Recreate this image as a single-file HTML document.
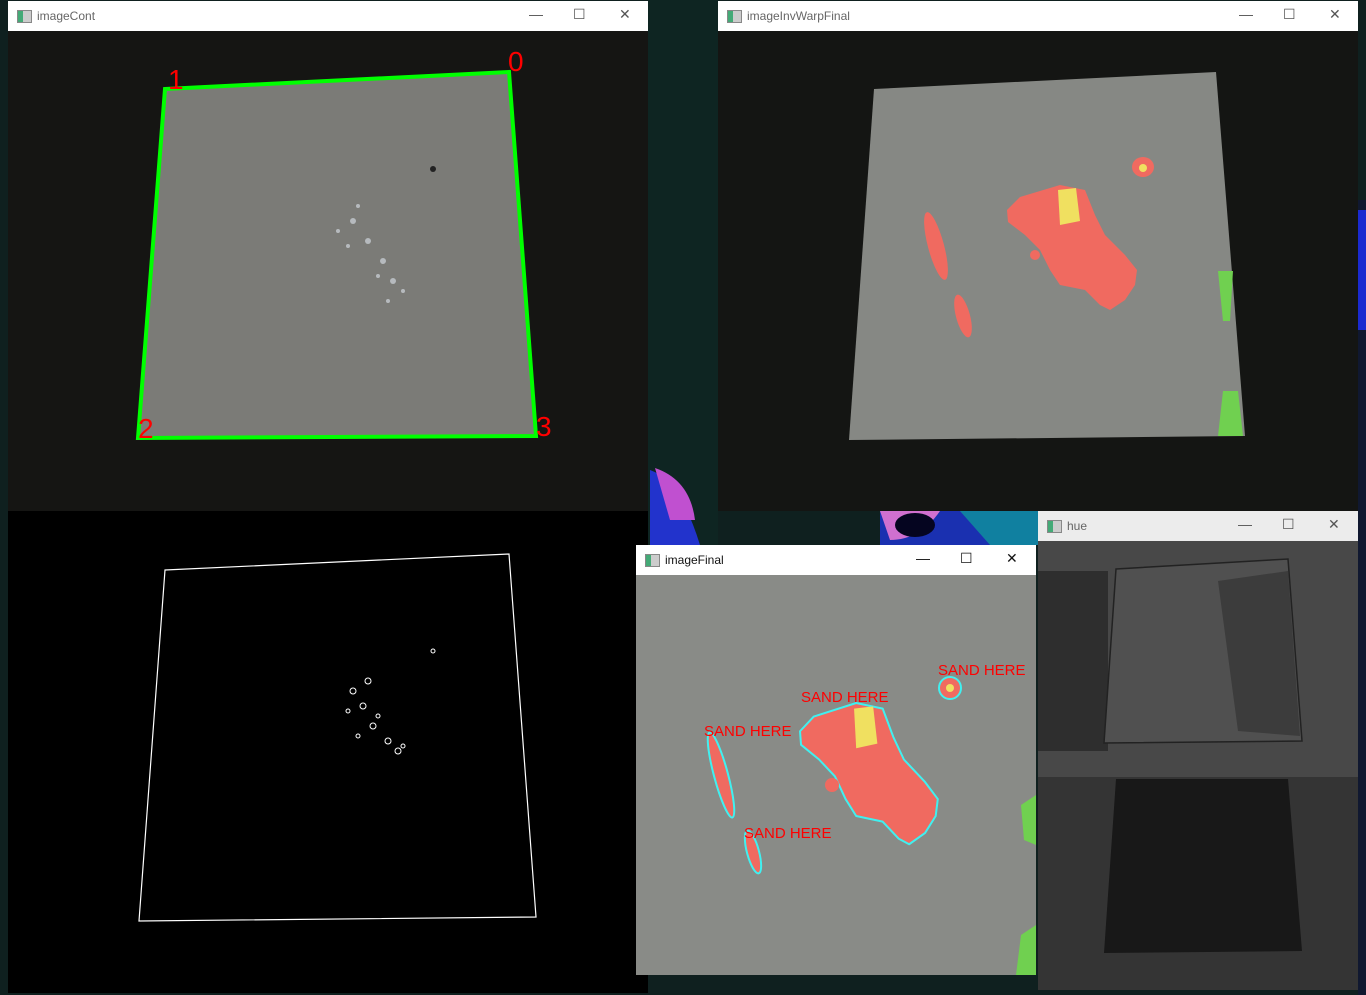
<!DOCTYPE html>
<html><head><meta charset="utf-8"><style>
body{margin:0;width:1366px;height:995px;overflow:hidden;background:#0f201f;position:relative;font-family:"Liberation Sans",sans-serif}
.w{position:absolute;background:#fff}
.t{position:absolute;left:0;right:0;top:0;background:#fff;font-size:12px;color:#666;}
.t .ic{position:absolute;left:9px;top:9px;width:13px;height:11px;border:1px solid #888;background:linear-gradient(90deg,#4a7 0 40%,#ccc 40%)}
.t .n{position:absolute;left:29px;top:8px}
.t .b{position:absolute;top:5px;font-size:14px;color:#555}
.c{position:absolute;left:0;right:0;bottom:0}
</style></head><body>
<svg style="position:absolute;left:0;top:0" width="1366" height="995">
<rect x="648" y="0" width="70" height="560" fill="#0e2522"/>
<path d="M650 470 Q680 480 700 545 L650 545Z" fill="#2233cc"/>
<path d="M655 468 Q690 480 695 520 L670 520Z" fill="#c050d0"/>
<rect x="880" y="511" width="160" height="34" fill="#1a30b0"/>
<path d="M880 511 L940 511 Q920 540 890 540Z" fill="#d070d0"/>
<ellipse cx="915" cy="525" rx="20" ry="12" fill="#050520"/>
<path d="M960 511 L1038 511 L1038 545 L990 545Z" fill="#1080a0"/>
<rect x="1358" y="200" width="8" height="795" fill="#101830"/>
<rect x="1358" y="210" width="8" height="120" fill="#1a2ad0"/>
</svg>

<!-- imageCont -->
<div class="w" style="left:8px;top:1px;width:640px;height:510px;border-radius:6px 6px 0 0">
<div class="t" style="height:30px"><span class="ic"></span><span class="n">imageCont</span><span class="b" style="left:521px">—</span><span class="b" style="left:565px">☐</span><span class="b" style="left:611px">✕</span></div>
<svg class="c" width="640" height="480" style="top:30px;background:#151513">
<polygon points="157,58 501,41 528,405 130,407" fill="#7b7b77"/>
<polygon points="157,58 501,41 528,405 130,407" fill="none" stroke="#00ff00" stroke-width="4"/>
<g fill="#cfd6dc" opacity=".7"><circle cx="345" cy="190" r="3"/><circle cx="360" cy="210" r="3"/><circle cx="375" cy="230" r="3"/><circle cx="385" cy="250" r="3"/><circle cx="350" cy="175" r="2"/><circle cx="330" cy="200" r="2"/><circle cx="370" cy="245" r="2"/><circle cx="395" cy="260" r="2"/><circle cx="340" cy="215" r="2"/><circle cx="380" cy="270" r="2"/></g>
<circle cx="425" cy="138" r="3" fill="#222"/>
<g fill="#ff0000" font-size="28" font-family="Liberation Sans"><text x="500" y="40">0</text><text x="160" y="58">1</text><text x="130" y="407">2</text><text x="528" y="405">3</text></g>
</svg></div>

<!-- imageInvWarpFinal -->
<div class="w" style="left:718px;top:1px;width:640px;height:510px;border-radius:6px 6px 0 0">
<div class="t" style="height:30px"><span class="ic"></span><span class="n">imageInvWarpFinal</span><span class="b" style="left:521px">—</span><span class="b" style="left:565px">☐</span><span class="b" style="left:611px">✕</span></div>
<svg class="c" width="640" height="480" style="top:30px;background:#141513">
<polygon points="156,58 498,41 527,405 131,409" fill="#868884"/>
<path id="blob" d="M289 179 L302 166 L342 154 L367 159 L377 184 L387 204 L407 224 L419 239 L417 254 L407 269 L392 279 L382 274 L367 259 L342 254 L332 239 L322 219 L307 204 L290 191Z" fill="#f06a60" stroke-linejoin="round"/>
<path d="M340 159 L358 157 L362 190 L342 194Z" fill="#f0e060"/>
<circle cx="317" cy="224" r="5" fill="#f06a60"/>
<ellipse cx="425" cy="136" rx="11" ry="10" fill="#f06a60"/><circle cx="425" cy="137" r="4" fill="#f0e060"/>
<ellipse cx="218" cy="215" rx="8" ry="35" fill="#f06a60" transform="rotate(-15 218 215)"/>
<ellipse cx="245" cy="285" rx="7" ry="22" fill="#f06a60" transform="rotate(-15 245 285)"/>
<path d="M500 240 L515 240 L512 290 L505 290Z" fill="#70d050"/>
<path d="M505 360 L520 360 L525 405 L500 405Z" fill="#70d050"/>
</svg></div>

<!-- edges -->
<svg style="position:absolute;left:8px;top:511px;background:#000" width="640" height="482">
<polygon points="157,59 501,43 528,406 131,410" fill="none" stroke="#fff" stroke-width="1.2"/>
<g fill="none" stroke="#fff" stroke-width="1"><circle cx="345" cy="180" r="3"/><circle cx="355" cy="195" r="3"/><circle cx="365" cy="215" r="3"/><circle cx="380" cy="230" r="3"/><circle cx="390" cy="240" r="3"/><circle cx="340" cy="200" r="2"/><circle cx="370" cy="205" r="2"/><circle cx="360" cy="170" r="3"/><circle cx="395" cy="235" r="2"/><circle cx="350" cy="225" r="2"/><circle cx="425" cy="140" r="2"/></g>
</svg>

<!-- imageFinal -->
<div class="w" style="left:636px;top:545px;width:400px;height:430px;border-radius:6px 6px 0 0">
<div class="t" style="height:30px"><span class="ic"></span><span class="n" style="color:#111">imageFinal</span><span class="b" style="left:280px;color:#111">—</span><span class="b" style="left:324px;color:#111">☐</span><span class="b" style="left:370px;color:#111">✕</span></div>
<svg class="c" width="400" height="400" style="top:30px;background:#898b87">
<g transform="translate(164,128) scale(1.06,1.13) translate(-289,-154)">
<path d="M289 179 L302 166 L342 154 L367 159 L377 184 L387 204 L407 224 L419 239 L417 254 L407 269 L392 279 L382 274 L367 259 L342 254 L332 239 L322 219 L307 204 L290 191Z" fill="#f06a60" stroke="#40f0f0" stroke-width="2" vector-effect="non-scaling-stroke" stroke-linejoin="round"/>
<path d="M340 159 L358 157 L362 190 L342 194Z" fill="#f0e060"/>
</g>
<circle cx="196" cy="210" r="7" fill="#f06a60"/>
<circle cx="314" cy="113" r="11" fill="#f06a60" stroke="#40f0f0" stroke-width="2"/><circle cx="314" cy="113" r="4" fill="#f0e060"/>
<ellipse cx="85" cy="200" rx="7" ry="44" fill="#f06a60" stroke="#40f0f0" stroke-width="2" transform="rotate(-15 85 200)"/>
<ellipse cx="117" cy="277" rx="6" ry="22" fill="#f06a60" stroke="#40f0f0" stroke-width="2" transform="rotate(-15 117 277)"/>
<path d="M385 230 L400 220 L400 270 L388 265Z" fill="#70d050"/><path d="M385 360 L400 350 L400 400 L380 400Z" fill="#70d050"/>
<g fill="#ff0000" font-size="15" font-family="Liberation Sans" style="white-space:pre"><text x="302" y="100">SAND  HERE</text><text x="165" y="127">SAND  HERE</text><text x="68" y="161">SAND  HERE</text><text x="108" y="263">SAND  HERE</text></g>
</svg></div>

<!-- hue -->
<div class="w" style="left:1038px;top:511px;width:320px;height:479px;background:#e8e8e8">
<div class="t" style="height:30px;background:#ececec"><span class="ic"></span><span class="n">hue</span><span class="b" style="left:200px">—</span><span class="b" style="left:244px">☐</span><span class="b" style="left:290px">✕</span></div>
<svg class="c" width="320" height="449" style="top:30px;background:#3a3a3a">
<rect x="0" y="0" width="320" height="236" fill="#484848"/>
<rect x="0" y="30" width="70" height="180" fill="#2e2e2e"/>
<polygon points="78,28 250,18 264,200 66,202" fill="#505050"/>
<polygon points="180,40 250,30 262,195 200,190" fill="#3c3c3c"/>
<polygon points="78,28 250,18 264,200 66,202" fill="none" stroke="#222" stroke-width="1.5"/>
<rect x="0" y="236" width="320" height="213" fill="#343434"/>
<polygon points="78,238 250,238 264,410 66,412" fill="#181818"/>
</svg></div>
</body></html>
